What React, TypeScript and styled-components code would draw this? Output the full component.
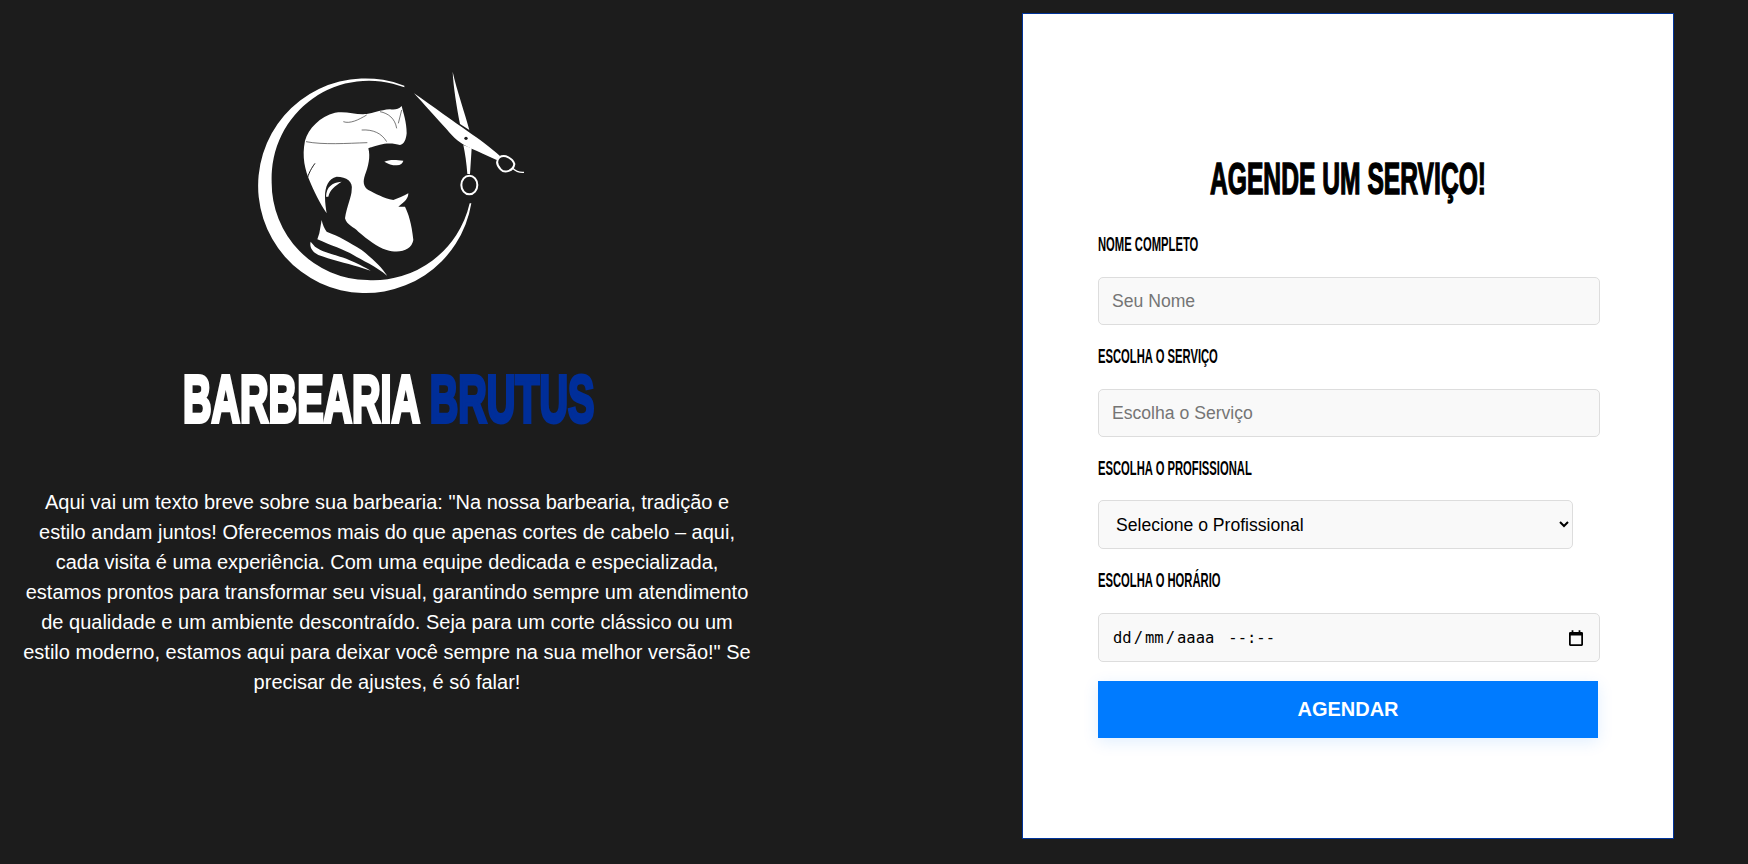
import styled, { createGlobalStyle } from 'styled-components'

const GlobalStyle = createGlobalStyle`
  * {
    box-sizing: border-box;
  }

  html,
  body {
    margin: 0;
    background: #1c1c1c;
    font-family: 'Liberation Sans', Arial, sans-serif;
  }
`

const Page = styled.main`
  display: flex;
  justify-content: space-between;
  align-items: flex-start;
  min-height: 864px;
  padding: 13px 74px 0 21px;
`

const Intro = styled.section`
  display: flex;
  flex-direction: column;
  align-items: center;
  width: 732px;
  padding-top: 37px;
`

const LogoMark = styled.svg`
  display: block;
  width: 320px;
  height: 260px;
  margin-left: 6px;
`

const BrandName = styled.h1`
  margin: 51px 0 0 3px;
  font-size: 67px;
  line-height: 76px;
  font-weight: 700;
  color: #fff;
  white-space: nowrap;
  transform: scaleX(0.59);
  -webkit-text-stroke: 4px currentColor;
`

const BrandAccent = styled.span`
  color: #002e99;
`

const Blurb = styled.p`
  margin: 50px 0 0;
  font-size: 20px;
  line-height: 30px;
  color: #fff;
  text-align: center;
`

const Card = styled.section`
  width: 652px;
  height: 826px;
  padding: 143px 75px 0;
  background: #fff;
  border: 1px solid #003399;
`

const CardTitle = styled.h2`
  margin: 0 0 12px;
  font-size: 44px;
  line-height: 44px;
  font-weight: 700;
  color: #000;
  text-align: center;
  white-space: nowrap;
  transform: scaleX(0.56);
  -webkit-text-stroke: 1.5px currentColor;
`

const Form = styled.form`
  display: flex;
  flex-direction: column;
  align-items: flex-start;
`

const FieldLabel = styled.label`
  display: block;
  height: 20px;
  margin: 21px 0 23px;
  font-size: 21px;
  line-height: 20px;
  font-weight: 700;
  color: #000;
  white-space: nowrap;
  transform: scaleX(0.535);
  transform-origin: left center;
`

const TextField = styled.input`
  width: 502px;
  height: 48px;
  padding: 0 13px;
  font-family: 'Liberation Sans', Arial, sans-serif;
  font-size: 17.6px;
  color: #000;
  background: #f9f9f9;
  border: 1px solid #ddd;
  border-radius: 5px;

  &::placeholder {
    color: #757575;
  }
`

const SelectField = styled.select`
  width: 475px;
  height: 49px;
  margin-top: -1px;
  padding: 0 13px;
  font-family: 'Liberation Sans', Arial, sans-serif;
  font-size: 17.6px;
  color: #000;
  background: #f9f9f9;
  border: 1px solid #ddd;
  border-radius: 5px;
`

const DateField = styled.div`
  display: flex;
  justify-content: space-between;
  align-items: center;
  width: 502px;
  height: 49px;
  padding: 0 16px 0 12px;
  font-family: 'DejaVu Sans Mono', monospace;
  font-size: 15.5px;
  color: #000;
  background: #f9f9f9;
  border: 1px solid #ddd;
  border-radius: 5px;
`

const DateText = styled.span`
  display: flex;
`

const DatePart = styled.span`
  padding: 0 2px;
`

const TimeText = styled.span`
  margin-left: 12px;
`

const SubmitButton = styled.button`
  width: 500px;
  height: 57px;
  margin-top: 19px;
  font-family: 'Liberation Sans', Arial, sans-serif;
  font-size: 20px;
  font-weight: 700;
  color: #fff;
  background: #007bff;
  border: 0;
  box-shadow: 0 4px 15px rgba(0, 123, 255, 0.12);
`

function Logo() {
  return (
    <LogoMark viewBox="0 0 960 780" role="img" aria-label="Barbearia Brutus">
      <g fill="#fff">
        {/* ring */}
        <path d="M523 107 A322 322 0 1 0 724 460 L719 460 A297 297 0 0 1 412 690 A290 292 0 0 1 125 395 A292 292 0 0 1 523 112 Z" />
        {/* hair, sideburn and beard */}
        <path d="M225 272 C235 235 270 200 315 188 C350 182 375 195 410 192 C430 190 450 180 480 178 C495 180 505 178 515 168 C520 190 530 215 530 250 C528 270 522 283 510 285 C495 280 470 278 450 284 C435 288 420 292 415 295 C422 320 415 350 405 375 C398 395 400 410 415 420 C435 430 460 445 490 450 C505 445 520 438 535 430 C535 445 525 455 505 470 L525 470 C535 490 545 520 550 570 C545 600 510 612 470 600 C440 590 415 570 385 545 C370 530 350 525 345 505 C350 470 365 440 365 420 C370 395 350 380 320 380 C295 385 285 410 285 440 C285 460 288 475 290 490 C270 460 250 420 240 395 C225 360 215 320 225 272 Z" />
        {/* eye */}
        <path d="M463 335 C475 330 490 328 520 332 C518 340 512 345 500 346 C485 346 475 342 463 335 Z" />
        {/* ear */}
        <path d="M288 440 C290 410 305 398 335 395 C315 408 300 418 295 440 Z" />
        {/* collar */}
        <path d="M275 510 L268 550 L262 568 C300 585 345 600 370 615 C395 630 440 650 472 678 C455 650 420 620 395 600 C355 575 330 560 290 545 C283 535 278 525 275 510 Z" />
        <path d="M242 575 C238 590 245 605 265 615 C300 628 350 640 385 650 L422 662 C395 645 350 625 330 620 C300 610 275 605 255 590 Z" />
      </g>
      <g fill="none" stroke="#1c1c1c" strokeWidth="1.800">
        <path d="M228 275 C280 285 350 280 412 278" />
        <path d="M340 215 C360 222 385 210 410 195" />
        <path d="M395 240 C430 238 455 250 470 275" />
        <path d="M450 185 C475 190 495 205 500 235" />
        <path d="M515 180 L505 220" />
        <path d="M255 340 C240 360 232 380 230 395" strokeWidth="3" />
      </g>
      <g fill="#fff">
        {/* scissors */}
        <path d="M668 65 C680 120 705 190 718 240 L690 222 C680 170 670 110 668 65 Z" />
        <path d="M552 130 C610 170 670 215 715 245 C745 265 785 295 810 318 L800 330 C770 315 745 305 725 296 C690 282 670 262 650 238 C620 205 580 160 552 130 Z" />
        <path d="M700 285 L725 295 L720 372 L712 372 C710 340 705 310 700 285 Z" />
      </g>
      <circle cx="708" cy="265" r="5" fill="#1c1c1c" />
      <g fill="none" stroke="#fff">
        <ellipse cx="718" cy="405" rx="24" ry="28" strokeWidth="6" />
        <path d="M808 322 C825 312 848 325 853 342 C850 362 825 372 812 358 C800 345 798 332 808 322 Z" strokeWidth="6" />
        <path d="M848 355 C858 365 870 368 882 367" strokeWidth="4" />
      </g>
    </LogoMark>
  )
}

function CalendarIcon() {
  return (
    <svg width="14" height="16" viewBox="0 0 16 18" aria-hidden="true">
      <path d="M3 0h2v2h6V0h2v2h1.500A1.500 1.500 0 0 1 16 3.500v13a1.500 1.500 0 0 1-1.500 1.500h-13A1.500 1.500 0 0 1 0 16.500v-13A1.500 1.500 0 0 1 1.500 2H3zM2 6v10h12V6z" fill="#000" />
    </svg>
  )
}

export default function App() {
  return (
    <>
      <GlobalStyle />
      <Page>
        <Intro>
          <Logo />
          <BrandName>
            BARBEARIA <BrandAccent>BRUTUS</BrandAccent>
          </BrandName>
          <Blurb>
            Aqui vai um texto breve sobre sua barbearia: "Na nossa barbearia, tradição e estilo andam juntos! Oferecemos mais do que apenas cortes de cabelo – aqui, cada visita é uma experiência. Com uma equipe dedicada e especializada, estamos prontos para transformar seu visual, garantindo sempre um atendimento de qualidade e um ambiente descontraído. Seja para um corte clássico ou um estilo moderno, estamos aqui para deixar você sempre na sua melhor versão!" Se precisar de ajustes, é só falar!
          </Blurb>
        </Intro>
        <Card>
          <CardTitle>AGENDE UM SERVIÇO!</CardTitle>
          <Form>
            <FieldLabel htmlFor="nome">NOME COMPLETO</FieldLabel>
            <TextField id="nome" type="text" placeholder="Seu Nome" />
            <FieldLabel htmlFor="servico">ESCOLHA O SERVIÇO</FieldLabel>
            <TextField id="servico" type="text" placeholder="Escolha o Serviço" />
            <FieldLabel htmlFor="profissional">ESCOLHA O PROFISSIONAL</FieldLabel>
            <SelectField id="profissional" defaultValue="">
              <option value="">Selecione o Profissional</option>
            </SelectField>
            <FieldLabel>ESCOLHA O HORÁRIO</FieldLabel>
            <DateField>
              <DateText>
                <DatePart>dd</DatePart>/<DatePart>mm</DatePart>/<DatePart>aaaa</DatePart>
                <TimeText>--:--</TimeText>
              </DateText>
              <CalendarIcon />
            </DateField>
            <SubmitButton type="submit">AGENDAR</SubmitButton>
          </Form>
        </Card>
      </Page>
    </>
  )
}
